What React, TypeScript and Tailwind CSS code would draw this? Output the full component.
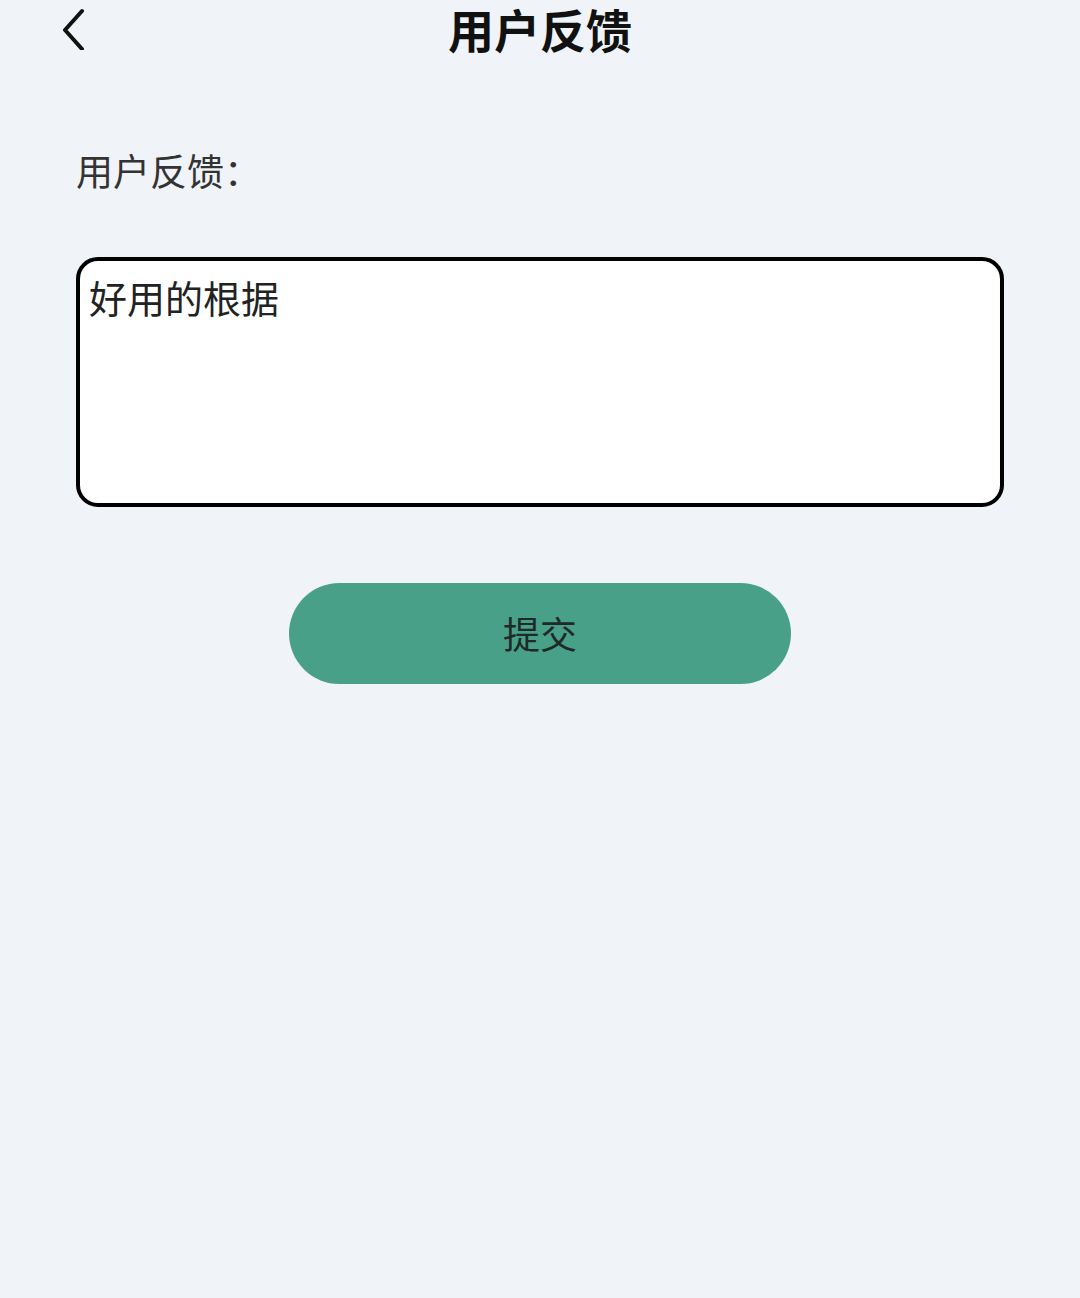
import { useState } from 'react'

function BackIcon() {
  return (
    <svg width="32" height="44" viewBox="0 0 32 44" fill="none">
      <path d="M26 5 L9 24 L26 43" stroke="#111" strokeWidth="4" strokeLinecap="round" strokeLinejoin="round" />
    </svg>
  )
}

export default function App() {
  const [text, setText] = useState('好用的根据')

  return (
    <div
      className="min-h-[1298px] w-full bg-[#f0f4f8] text-[#222]"
      style={{ fontFamily: '"Noto Sans CJK SC", "Noto Sans", sans-serif' }}
    >
      <header className="relative flex h-[58px] items-start justify-center">
        <button className="absolute left-[56px] top-[6px]">
          <BackIcon />
        </button>
        <h1 className="text-[46px] font-bold leading-[56px] text-[#111]">用户反馈</h1>
      </header>

      <div className="px-[76px]">
        <div className="pt-[92px] text-[37px] leading-[40px] text-[#333]">用户反馈：</div>

        <div className="mt-[67px] h-[250px] rounded-[22px] border-[4px] border-black bg-white px-[9px] pt-[14px]">
          <textarea
            value={text}
            onChange={(e) => setText(e.target.value)}
            className="h-full w-full resize-none bg-transparent text-[38px] leading-[44px] text-[#222] outline-none"
          />
        </div>

        <div className="mt-[76px] flex justify-center">
          <button className="flex h-[101px] w-[502px] items-center justify-center rounded-full bg-[#49a088] text-[37px] text-[#1f2a26]">
            提交
          </button>
        </div>
      </div>
    </div>
  )
}
